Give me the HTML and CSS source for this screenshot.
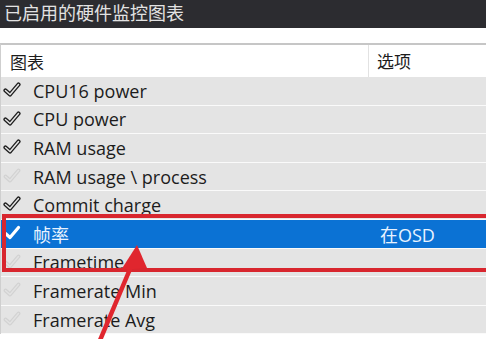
FILE: index.html
```html
<!DOCTYPE html>
<html lang="zh-CN">
<head>
    <meta charset="UTF-8">
    <title>已启用的硬件监控图表</title>
    <link rel="stylesheet" href="styles.css">
</head>
<body>
    <div class="title-bar">已启用的硬件监控图表</div>

    <div class="graph-list">
        <div class="head">
            <div class="col-name">图表</div>
            <div class="col-opt">选项</div>
        </div>

        <div class="row">
            <svg class="check on" viewBox="0 0 18 16"><path class="outer" d="M2.5 8.5 L7 12.5 L15.5 2.5"/><path class="inner" d="M2.5 8.5 L7 12.5 L15.5 2.5"/></svg>
            <div class="col-name">CPU16 power</div>
            <div class="col-opt"></div>
        </div>
        <div class="row">
            <svg class="check on" viewBox="0 0 18 16"><path class="outer" d="M2.5 8.5 L7 12.5 L15.5 2.5"/><path class="inner" d="M2.5 8.5 L7 12.5 L15.5 2.5"/></svg>
            <div class="col-name">CPU power</div>
            <div class="col-opt"></div>
        </div>
        <div class="row">
            <svg class="check on" viewBox="0 0 18 16"><path class="outer" d="M2.5 8.5 L7 12.5 L15.5 2.5"/><path class="inner" d="M2.5 8.5 L7 12.5 L15.5 2.5"/></svg>
            <div class="col-name">RAM usage</div>
            <div class="col-opt"></div>
        </div>
        <div class="row">
            <svg class="check off" viewBox="0 0 18 16"><path class="outer" d="M2.5 8.5 L7 12.5 L15.5 2.5"/><path class="inner" d="M2.5 8.5 L7 12.5 L15.5 2.5"/></svg>
            <div class="col-name">RAM usage \ process</div>
            <div class="col-opt"></div>
        </div>
        <div class="row">
            <svg class="check on" viewBox="0 0 18 16"><path class="outer" d="M2.5 8.5 L7 12.5 L15.5 2.5"/><path class="inner" d="M2.5 8.5 L7 12.5 L15.5 2.5"/></svg>
            <div class="col-name">Commit charge</div>
            <div class="col-opt"></div>
        </div>
        <div class="row selected">
            <svg class="check sel" viewBox="0 0 18 16"><path class="outer" d="M2.5 8.5 L7 12.5 L15.5 2.5"/></svg>
            <div class="col-name">帧率</div>
            <div class="col-opt">在OSD</div>
        </div>
        <div class="row">
            <svg class="check off" viewBox="0 0 18 16"><path class="outer" d="M2.5 8.5 L7 12.5 L15.5 2.5"/><path class="inner" d="M2.5 8.5 L7 12.5 L15.5 2.5"/></svg>
            <div class="col-name">Frametime</div>
            <div class="col-opt"></div>
        </div>
        <div class="row">
            <svg class="check off" viewBox="0 0 18 16"><path class="outer" d="M2.5 8.5 L7 12.5 L15.5 2.5"/><path class="inner" d="M2.5 8.5 L7 12.5 L15.5 2.5"/></svg>
            <div class="col-name">Framerate Min</div>
            <div class="col-opt"></div>
        </div>
        <div class="row">
            <svg class="check off" viewBox="0 0 18 16"><path class="outer" d="M2.5 8.5 L7 12.5 L15.5 2.5"/><path class="inner" d="M2.5 8.5 L7 12.5 L15.5 2.5"/></svg>
            <div class="col-name">Framerate Avg</div>
            <div class="col-opt"></div>
        </div>
    </div>

    <!-- annotation drawn over the screenshot -->
    <svg class="annotation" viewBox="0 0 486 339">
        <rect x="4" y="216" width="500" height="54" fill="none" stroke="#d8262e" stroke-width="4"/>
        <line x1="98" y1="345" x2="133" y2="262" stroke="#e0262e" stroke-width="4.5"/>
        <polygon points="137,245 121,270 147,268" fill="#e0262e"/>
    </svg>
</body>
</html>
```

FILE: styles.css
```css
body {
    margin: 0;
    font-family: 'Open Sans', 'Noto Sans CJK SC', sans-serif;
    background-color: #ffffff;
    color: #1c1c1c;
    position: relative;
    overflow: hidden;
    height: 339px;
}
.title-bar {
    height: 28px;
    line-height: 24px;
    padding-left: 4px;
    background-color: #2c2c30;
    color: #e2e2e2;
    font-family: 'Noto Sans CJK SC', sans-serif;
    font-size: 18px;
}
.graph-list {
    margin-top: 15px;
    border-top: 2px solid #c6c6c6;
    border-left: 1px solid #cfcfcf;
}
.head, .row {
    display: grid;
    grid-template-columns: 367px 1fr;
    align-items: center;
    position: relative;
}
.head {
    height: 32px;
    background-color: #ffffff;
    font-family: 'Noto Sans CJK SC', sans-serif;
    font-size: 17px;
}
.head .col-name {
    padding-left: 9px;
}
.head .col-opt {
    height: 100%;
    line-height: 32px;
    padding-left: 8px;
    border-left: 1px solid #e2e2e2;
}
.row {
    box-sizing: border-box;
    height: 28.6px;
    background-color: #e4e4e4;
    border-bottom: 1px solid #fafafa;
    font-size: 18px;
}
.row .col-name {
    padding-left: 32px;
    white-space: nowrap;
}
.row .col-opt {
    padding-left: 12px;
}
.row.selected {
    background-color: #0b72d4;
    color: #e8f2ff;
}
.check {
    position: absolute;
    left: 2px;
    top: 5px;
    width: 18px;
    height: 16px;
    fill: none;
    stroke-linecap: round;
    stroke-linejoin: round;
}
.check.on .outer {
    stroke: #1e1e1e;
    stroke-width: 4.2;
}
.check.on .inner {
    stroke: #e4e4e4;
    stroke-width: 1.5;
}
.check.off .outer {
    stroke: #d2d2d2;
    stroke-width: 3.8;
}
.check.off .inner {
    stroke: #e2e2e2;
    stroke-width: 1.5;
}
.check.sel .outer {
    stroke: #ffffff;
    stroke-width: 3.2;
}
.annotation {
    position: absolute;
    left: 0;
    top: 0;
    width: 486px;
    height: 339px;
    pointer-events: none;
}
```
